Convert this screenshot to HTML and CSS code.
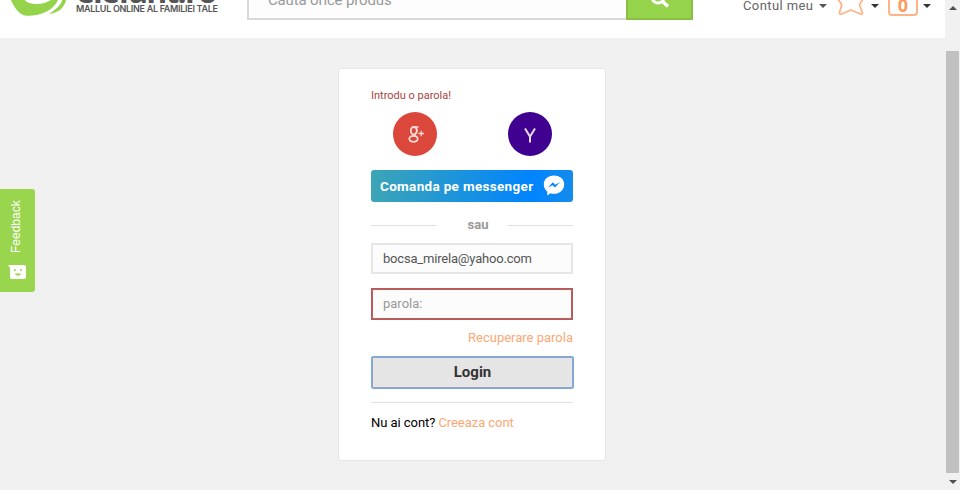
FILE: index.html
```html
<!DOCTYPE html>
<html lang="ro">
<head>
<meta charset="utf-8">
<title>elefant.ro - Login</title>
<link rel="stylesheet" href="styles.css">
</head>
<body>
<div class="window">
  <div class="page">
    <header class="header">
      <div class="logo">
        <svg class="logo-mark" width="60" height="38" viewBox="0 0 60 38"><path d="M0-2C3 5 8 14 15 15.500C26 17 38 12 43 7C46 4 48 1 49-3L45-3C40 1 34 4.500 25 4C18 3.500 14 1 13-3L0-3Z" fill="#95d44a"/><path d="M39 13.800C49 13.500 56 6 56.500-3L53-3C52 4 47 9 39 13.800Z" fill="#95d44a"/></svg>
        <div class="logo-words"><div class="brand">elefant.ro</div><div class="slogan">MALLUL ONLINE AL FAMILIEI TALE</div></div>
      </div>
      <div class="search">
        <div class="search-input"><span class="search-text">Cauta orice produs</span></div>
        <div class="search-button"><svg width="20" height="20" viewBox="0 0 20 20" fill="none" stroke="#fff"><circle cx="8" cy="8" r="6" stroke-width="3"/><path d="M12.500 12.500L18 17.500" stroke-width="3.500"/></svg></div>
      </div>
      <nav class="account">
        <span class="account-text">Contul meu</span><i class="caret grey"></i>
        <svg class="star" width="32" height="32" viewBox="0 0 32 32"><path d="M16 1L20.500 11L30 12L25 19.500Q24.300 20.500 24.800 22L27.500 28.500Q27.700 30.600 25.500 30L16 26L6.500 30Q4.300 30.600 4.500 28.500L6.500 22Q7 20.500 6 19.500L1 12L11.500 11Z" fill="#fff" stroke="#ffb488" stroke-width="1.800" stroke-linejoin="round"/></svg><i class="caret"></i>
        <span class="cart">0</span><i class="caret"></i>
      </nav>
    </header>
    <main class="main">
      <section class="card">
        <p class="error"><span>Introdu o parola!</span></p>
        <div class="social">
          <a class="round google"><svg width="20" height="18" viewBox="0 0 20 18" fill="none" stroke="#f9dcd9" stroke-width="1.800"><ellipse cx="5.800" cy="4.700" rx="3" ry="3.700"/><path d="M4.500 1H10.500M8 2Q10.500 5 7.500 7.500Q5.500 9 8 10.300" stroke-width="1.300"/><ellipse cx="5.500" cy="12.800" rx="4.200" ry="3"/><path d="M10.500 7.500H16M13.300 4.800V10.300" stroke-width="1.300"/></svg></a>
          <a class="round yahoo"><svg width="12" height="15" viewBox="0 0 12 15" fill="none" stroke="#e3d9ef" stroke-width="2"><path d="M1 .5L6 8.500L11 .5M6 8V14.500"/></svg></a>
        </div>
        <a class="messenger"><span>Comanda pe messenger</span><svg width="22" height="21" viewBox="0 0 22 21"><path d="M11 .5C5 .5.8 4.300.8 9.500C.8 12.500 2.200 15 4.300 16.800V20.500L7.500 18.300C15 20.500 21.200 15.600 21.200 9.500C21.200 4.300 17 .5 11 .5Z" fill="#fff"/><path d="M4.800 12.800L9.800 7.300L12.200 9.700L17.200 7L12 12.500L9.500 10.200Z" fill="#0b88f5"/></svg></a>
        <div class="or"><span>sau</span></div>
        <div class="field email"><span>bocsa_mirela@yahoo.com</span></div>
        <div class="field password"><span>parola:</span></div>
        <a class="recover"><span>Recuperare parola</span></a>
        <button class="login"><span>Login</span></button>
        <div class="signup"><span class="question">Nu ai cont?</span><a class="create">Creeaza cont</a></div>
      </section>
    </main>
  </div>
  <aside class="scrollbar"><i class="up"></i><div class="thumb"></div><i class="down"></i></aside>
  <div class="feedback"><span>Feedback</span><svg width="18" height="14" viewBox="0 0 18 14"><path d="M0 0H16Q18 0 18 2V12Q18 14 16 14H4Q2 14 2 12V3Z" fill="#fff"/><path d="M7 4V6M13 4V6" stroke="#9ad54e" stroke-width="1.500"/><path d="M6.500 8.500Q10 13 13.500 8.500Z" fill="#9ad54e"/></svg></div>
</div>
</body>
</html>
```

FILE: styles.css
```css
* { box-sizing: border-box; }
body { margin: 0; font-family: Roboto, "Noto Sans", sans-serif; background: #f1f1f1; }
.window { display: flex; width: 960px; height: 490px; position: relative; overflow: hidden; }
.page { width: 945px; }
.header { height: 38px; background: #fff; display: flex; overflow: hidden; }
.logo { width: 247px; display: flex; padding-left: 10px; flex: none; }
.logo-mark { flex: none; }
.logo-words { margin: -28px 0 0 6px; white-space: nowrap; }
.brand { font: 700 32px/38px "Open Sans", sans-serif; letter-spacing: -1.8px; height: 32px; color: #555; }
.slogan { font: 600 9px/10px Inter, sans-serif; letter-spacing: -.3px; color: #555; }
.search { display: flex; flex: none; width: 446px; height: 40px; margin-top: -20px; }
.search-input { width: 379px; border: 2px solid #d9d9d9; border-right: 0; background: #fdfdfd; padding: 8px 0 0 19px; font-size: 15px; line-height: 20px; letter-spacing: -.15px; color: #999; }
.search-button { width: 67px; background: #95d44a; border: 2px solid #8abf46; padding: 7px 0 0 22px; }
.account { display: flex; margin: -15px 0 0 50px; height: 40px; align-items: center; font-size: 13px; color: #666; }
.account-text { width: 71px; white-space: nowrap; letter-spacing: .4px; }
.caret { border: 4px solid transparent; border-top-color: #333; border-bottom: 0; flex: none; margin-top: 2px; }
.grey { margin-left: 5px; border-top-color: #555; }
.star { margin: -11px 4px 0 8px; }
.cart { width: 30px; height: 34px; margin: -13px 5px 0 9px; border: 2px solid #ffb488; border-radius: 4px; color: #ff9b60; font: 700 18px/20px "Open Sans", sans-serif; text-align: center; padding-top: 11px; }
.main { padding: 30px 0 0 338px; }
.card { width: 268px; height: 393px; background: #fff; border: 1px solid #e6e6e6; border-radius: 3px; padding: 19px 32px 0; }
.card span, .create { white-space: nowrap; }
.error { margin: 0; font-size: 11px; line-height: 15px; color: #a94442; }
.social { display: flex; gap: 71px; padding: 9px 22px 0; }
.round { width: 44px; height: 44px; border-radius: 50%; display: flex; flex: none; }
.google { background: #db483b; padding: 14px 0 0 15px; }
.yahoo { background: #400090; padding: 16px 0 0 16px; }
.messenger { display: flex; align-items: center; justify-content: space-between; height: 32px; margin-top: 14px; padding: 0 8px 0 9px; border-radius: 3px; background: linear-gradient(90deg, #3ca5b5, #0084ff 80%, #148ced); color: #fff; font-size: 13.500px; font-weight: 700; letter-spacing: .32px; }
.messenger svg { margin-top: -1px; }
.or { height: 41px; display: flex; align-items: center; justify-content: space-between; font-size: 13px; font-weight: 700; color: #999; padding-top: 5px; }
.or span { margin: -1px 0 0 12px; }
.or::before, .or::after { content: ""; width: 65px; height: 1px; background: #e0e0e0; }
.field { height: 31px; border: 2px solid #e6e6e6; background: #fcfcfc; padding: 4px 0 0 10px; font-size: 13px; line-height: 20px; color: #555; }
.email { letter-spacing: -.19px; }
.password { height: 32px; margin-top: 14px; border-color: #b85c5c; color: #999; }
.recover { display: block; text-align: right; font-size: 13px; line-height: 20px; color: #fda876; margin-top: 8px; height: 28px; }
.login { display: block; width: 203px; height: 33px; border: 1px solid #75a7f3; border-radius: 2px; padding: 0; background: #e5e5e5; box-shadow: inset 0 0 0 1px #9aa5ba; font: 700 15px/29px Roboto, sans-serif; color: #333; }
.signup { display: flex; gap: 3px; border-top: 1px solid #e0e0e0; margin-top: 13px; padding-top: 10px; font-size: 13px; line-height: 20px; letter-spacing: -.05px; color: #000; }
.create { color: #fda876; }
.scrollbar { width: 15px; height: 490px; background: #f1f1f1; display: flex; flex-direction: column; align-items: center; }
.scrollbar i { border: 4px solid transparent; flex: none; }
.up { margin-top: 2px; border-bottom-color: #505050 !important; }
.down { margin-top: 7px; border-top-color: #505050 !important; }
.thumb { width: 13px; height: 422px; margin-top: 41px; background: #c1c1c1; }
.feedback { position: absolute; left: 0; top: 189px; width: 35px; height: 103px; border-radius: 0 3px 3px 0; background: #9ad54e; color: #fff; display: flex; flex-direction: column; padding: 10px 0 0 8px; }
.feedback span { writing-mode: vertical-rl; transform: rotate(180deg); font: 12px/16px "Liberation Sans", sans-serif; height: 54px; width: 17px; }
.feedback svg { margin-top: 12px; }
```
